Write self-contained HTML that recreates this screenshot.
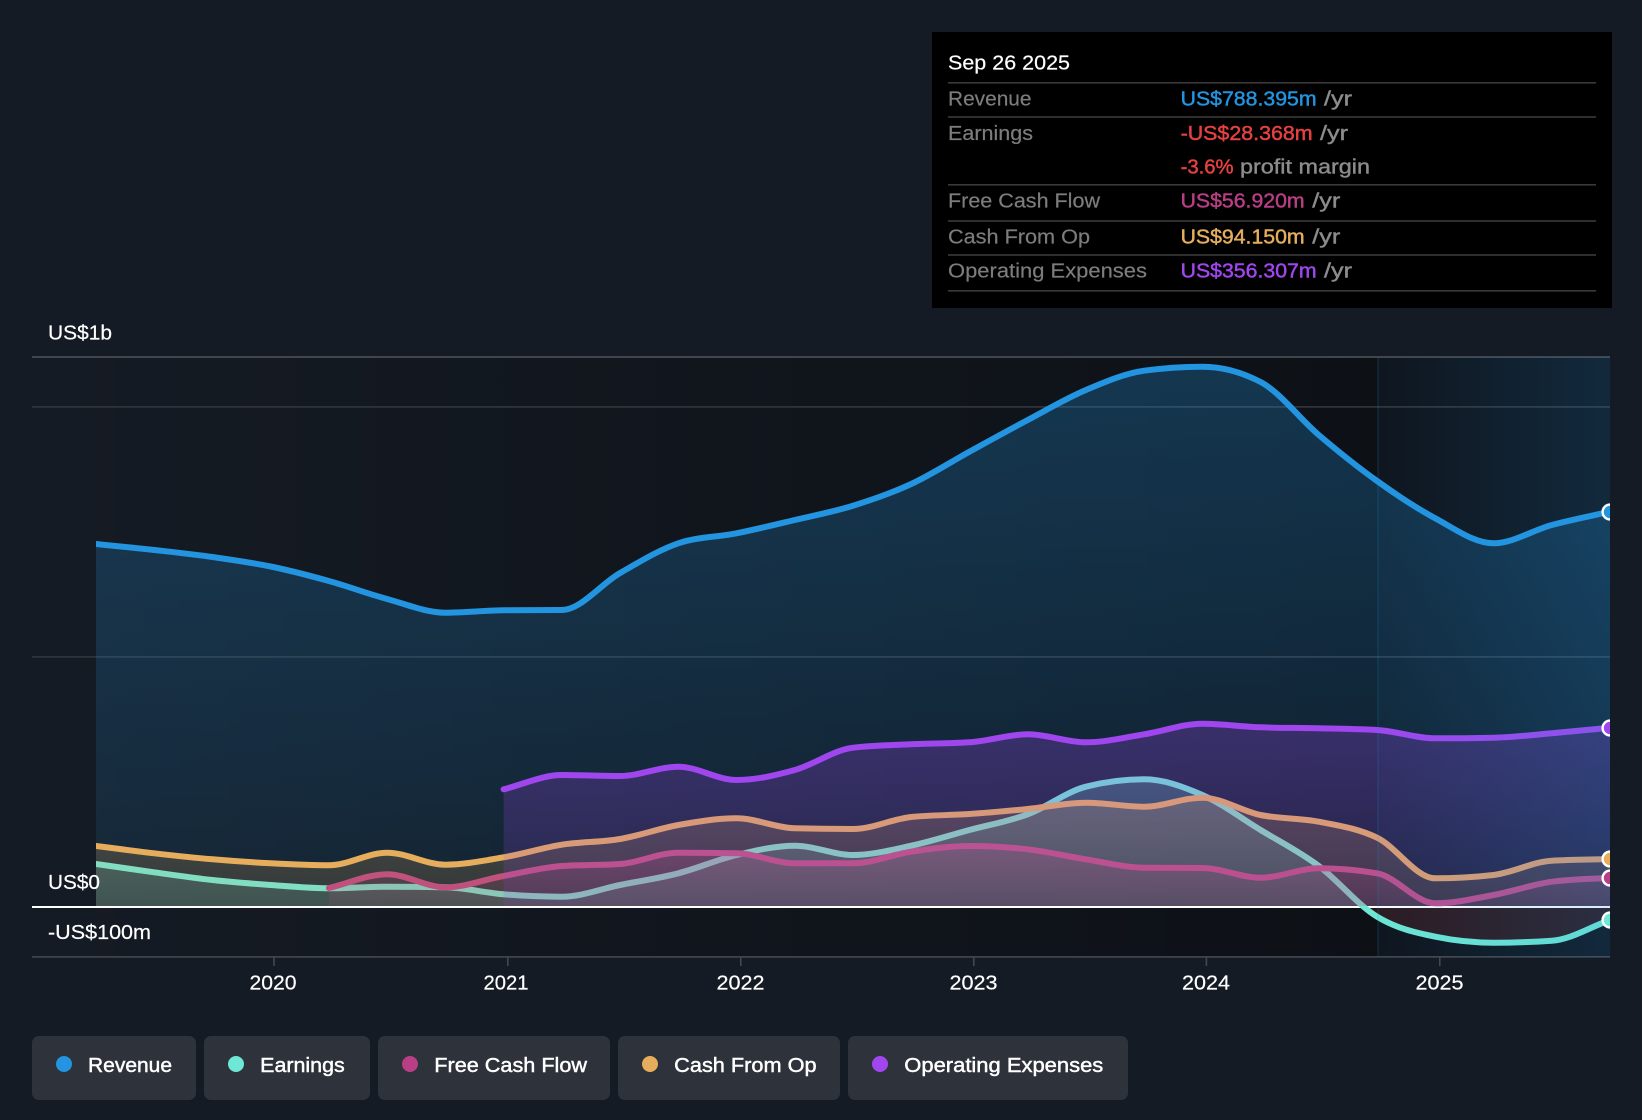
<!DOCTYPE html>
<html lang="en">
<head>
<meta charset="utf-8">
<title>Revenue and Earnings Chart</title>
<style>
html,body{margin:0;padding:0;background:#151b24;width:1642px;height:1120px;overflow:hidden}
svg{display:block;position:absolute;left:0;top:0}
text{font-family:"Liberation Sans",Arial,sans-serif;font-size:20px}
.m{stroke-width:.45px}
.w{fill:#fff;stroke:#fff;stroke-width:.2px}
.g{fill:#7c7c7c;stroke:#7c7c7c;stroke-width:.2px}
.y{fill:#8c8c8c;stroke:#8c8c8c;stroke-width:.4px}
.line{fill:none;stroke-width:6;stroke-linecap:round;stroke-linejoin:round}
</style>
</head>
<body>
<svg width="1642" height="1120" viewBox="0 0 1642 1120" xmlns="http://www.w3.org/2000/svg">
<defs>
<clipPath id="cp"><rect x="96" y="340" width="1514" height="640"/></clipPath>
<clipPath id="cdot"><rect x="1590" y="340" width="20" height="640"/></clipPath>
<clipPath id="cpos"><rect x="96" y="340" width="1514" height="566"/></clipPath>
<clipPath id="cneg"><rect x="96" y="908" width="1514" height="60"/></clipPath>
<linearGradient id="dark" gradientUnits="userSpaceOnUse" x1="32" y1="0" x2="1378" y2="0">
<stop offset="0" stop-color="#000" stop-opacity="0"/><stop offset="1" stop-color="#000" stop-opacity=".38"/>
</linearGradient>
<linearGradient id="fut" gradientUnits="userSpaceOnUse" x1="1378" y1="0" x2="1610" y2="0">
<stop offset="0" stop-color="#2394df" stop-opacity=".03"/><stop offset="1" stop-color="#2394df" stop-opacity=".18"/>
</linearGradient>
<linearGradient id="gR" gradientUnits="userSpaceOnUse" x1="0" y1="367" x2="0" y2="907">
<stop offset="0" stop-color="#2394df" stop-opacity=".28"/><stop offset="1" stop-color="#2394df" stop-opacity=".1"/>
</linearGradient>
<linearGradient id="gE" gradientUnits="userSpaceOnUse" x1="0" y1="779" x2="0" y2="907">
<stop offset="0" stop-color="#6ee7d4" stop-opacity=".27"/><stop offset="1" stop-color="#6ee7d4" stop-opacity=".16"/>
</linearGradient>
<linearGradient id="gF" gradientUnits="userSpaceOnUse" x1="0" y1="846" x2="0" y2="907">
<stop offset="0" stop-color="#b83f85" stop-opacity=".3"/><stop offset="1" stop-color="#b83f85" stop-opacity=".12"/>
</linearGradient>
<linearGradient id="gC" gradientUnits="userSpaceOnUse" x1="0" y1="797" x2="0" y2="907">
<stop offset="0" stop-color="#e6ae5c" stop-opacity=".24"/><stop offset="1" stop-color="#e6ae5c" stop-opacity=".14"/>
</linearGradient>
<linearGradient id="gO" gradientUnits="userSpaceOnUse" x1="0" y1="723" x2="0" y2="907">
<stop offset="0" stop-color="#a046ee" stop-opacity=".28"/><stop offset="1" stop-color="#a046ee" stop-opacity=".13"/>
</linearGradient>
</defs>

<rect width="1642" height="1120" fill="#151b24"/>
<rect x="32" y="357" width="1346" height="600" fill="url(#dark)"/>
<rect x="1378" y="357" width="232" height="600" fill="#000" fill-opacity=".3"/>

<rect x="32" y="356" width="1578" height="2" fill="#41454c"/>
<rect x="32" y="406" width="1578" height="1.8" fill="#2f3339"/>
<rect x="32" y="656" width="1578" height="1.8" fill="#2f3339"/>
<rect x="32" y="956" width="1578" height="1.8" fill="#3f434a"/>
<g fill="#43474e">
<rect x="273.2" y="957" width="1.6" height="9"/>
<rect x="507" y="957" width="1.6" height="9"/>
<rect x="740" y="957" width="1.6" height="9"/>
<rect x="973" y="957" width="1.6" height="9"/>
<rect x="1205.6" y="957" width="1.6" height="9"/>
<rect x="1439" y="957" width="1.6" height="9"/>
</g>
<rect x="32" y="906" width="1578" height="2" fill="#fff"/>

<g clip-path="url(#cp)">
<path id="aR" fill="url(#gR)" clip-path="url(#cpos)"/>
<path id="lR" class="line" stroke="#2394df"/>
<path id="aE" fill="url(#gE)" clip-path="url(#cpos)"/>
<path id="aE2" fill="#e64141" fill-opacity=".14" clip-path="url(#cneg)"/>
<path id="lE" class="line" stroke="#6ee7d4"/>
<path id="aF" fill="url(#gF)"/>
<path id="lF" class="line" stroke="#b83f85"/>
<path id="aC" fill="url(#gC)"/>
<path id="lC" class="line" stroke="#e6ae5c"/>
<path id="aO" fill="url(#gO)"/>
<path id="lO" class="line" stroke="#a046ee"/>
</g>

<rect x="1378" y="357" width="232" height="600" fill="url(#fut)"/>
<rect x="1377" y="358" width="2" height="598" fill="#2394df" fill-opacity=".12"/>

<g clip-path="url(#cdot)" stroke="#fff" stroke-width="2.4">
<circle cx="1610" cy="512" r="7.4" fill="#2394df"/>
<circle cx="1610" cy="920" r="7.4" fill="#6ee7d4"/>
<circle cx="1610" cy="878" r="7.4" fill="#b83f85"/>
<circle cx="1610" cy="859" r="7.4" fill="#e6ae5c"/>
<circle cx="1610" cy="728" r="7.4" fill="#a046ee"/>
</g>

<text class="w" x="48" y="339.3" textLength="64" lengthAdjust="spacingAndGlyphs">US$1b</text>
<text class="w" x="48" y="889" textLength="52" lengthAdjust="spacingAndGlyphs">US$0</text>
<text class="w" x="48" y="939" textLength="103" lengthAdjust="spacingAndGlyphs">-US$100m</text>

<text class="w" x="249.5" y="989.3" textLength="47" lengthAdjust="spacingAndGlyphs">2020</text>
<text class="w" x="483.5" y="989.3" textLength="45" lengthAdjust="spacingAndGlyphs">2021</text>
<text class="w" x="716.5" y="989.3" textLength="48" lengthAdjust="spacingAndGlyphs">2022</text>
<text class="w" x="949.5" y="989.3" textLength="48" lengthAdjust="spacingAndGlyphs">2023</text>
<text class="w" x="1182" y="989.3" textLength="48" lengthAdjust="spacingAndGlyphs">2024</text>
<text class="w" x="1415.5" y="989.3" textLength="48" lengthAdjust="spacingAndGlyphs">2025</text>

<!-- tooltip -->
<rect x="932" y="32" width="680" height="276" fill="#000"/>
<g fill="#3a3a3a">
<rect x="948" y="82" width="648" height="1.6"/>
<rect x="948" y="116.2" width="648" height="1.6"/>
<rect x="948" y="184" width="648" height="1.6"/>
<rect x="948" y="220.2" width="648" height="1.6"/>
<rect x="948" y="254.2" width="648" height="1.6"/>
<rect x="948" y="290" width="648" height="1.6"/>
</g>
<text class="w m" x="948" y="69.3" textLength="122" lengthAdjust="spacingAndGlyphs">Sep 26 2025</text>

<text class="g" x="948" y="105.3" textLength="83.5" lengthAdjust="spacingAndGlyphs">Revenue</text>
<text class="m" fill="#2394df" stroke="#2394df" x="1180.6" y="105.3" textLength="136" lengthAdjust="spacingAndGlyphs">US$788.395m</text>
<text class="y" x="1324" y="105.3" textLength="28" lengthAdjust="spacingAndGlyphs">/yr</text>

<text class="g" x="948" y="140" textLength="85" lengthAdjust="spacingAndGlyphs">Earnings</text>
<text class="m" fill="#e64141" stroke="#e64141" x="1180.6" y="140" textLength="132" lengthAdjust="spacingAndGlyphs">-US$28.368m</text>
<text class="y" x="1320" y="140" textLength="28" lengthAdjust="spacingAndGlyphs">/yr</text>

<text class="m" fill="#e64141" stroke="#e64141" x="1180.6" y="173.7" textLength="53" lengthAdjust="spacingAndGlyphs">-3.6%</text>
<text class="y" x="1240" y="173.7" textLength="130" lengthAdjust="spacingAndGlyphs">profit margin</text>

<text class="g" x="948" y="207.5" textLength="152" lengthAdjust="spacingAndGlyphs">Free Cash Flow</text>
<text class="m" fill="#b83f85" stroke="#b83f85" x="1180.6" y="207.5" textLength="124" lengthAdjust="spacingAndGlyphs">US$56.920m</text>
<text class="y" x="1312.3" y="207.5" textLength="28" lengthAdjust="spacingAndGlyphs">/yr</text>

<text class="g" x="948" y="243.3" textLength="142" lengthAdjust="spacingAndGlyphs">Cash From Op</text>
<text class="m" fill="#e6ae5c" stroke="#e6ae5c" x="1180.6" y="243.3" textLength="124" lengthAdjust="spacingAndGlyphs">US$94.150m</text>
<text class="y" x="1312.3" y="243.3" textLength="28" lengthAdjust="spacingAndGlyphs">/yr</text>

<text class="g" x="948" y="277.4" textLength="199" lengthAdjust="spacingAndGlyphs">Operating Expenses</text>
<text class="m" fill="#a046ee" stroke="#a046ee" x="1180.6" y="277.4" textLength="136" lengthAdjust="spacingAndGlyphs">US$356.307m</text>
<text class="y" x="1324" y="277.4" textLength="28" lengthAdjust="spacingAndGlyphs">/yr</text>

<!-- legend -->
<g fill="#2e323b">
<rect x="32" y="1036" width="164" height="64" rx="7"/>
<rect x="204" y="1036" width="166" height="64" rx="7"/>
<rect x="378" y="1036" width="232" height="64" rx="7"/>
<rect x="618" y="1036" width="222" height="64" rx="7"/>
<rect x="848" y="1036" width="280" height="64" rx="7"/>
</g>
<circle cx="64" cy="1064" r="8" fill="#2394df"/>
<circle cx="236" cy="1064" r="8" fill="#6ee7d4"/>
<circle cx="410" cy="1064" r="8" fill="#b83f85"/>
<circle cx="650" cy="1064" r="8" fill="#e6ae5c"/>
<circle cx="880" cy="1064" r="8" fill="#a046ee"/>
<g fill="#fff" stroke="#fff">
<text class="m" x="88" y="1072" textLength="84" lengthAdjust="spacingAndGlyphs">Revenue</text>
<text class="m" x="260.2" y="1072" textLength="84.5" lengthAdjust="spacingAndGlyphs">Earnings</text>
<text class="m" x="434.3" y="1072" textLength="152.7" lengthAdjust="spacingAndGlyphs">Free Cash Flow</text>
<text class="m" x="674.2" y="1072" textLength="142.4" lengthAdjust="spacingAndGlyphs">Cash From Op</text>
<text class="m" x="904.3" y="1072" textLength="199" lengthAdjust="spacingAndGlyphs">Operating Expenses</text>
</g>
</svg>
<script>
(function(){
var X=function(k){return 96+58.23*k};
var S={
R:[0,[544,550,557,566.5,581,599,612.7,610.3,610,573,543.3,533.3,520,505.7,484,451.7,420,390,370.7,366.7,382,435,481,518.3,543.3,525,511.7]],
E:[0,[864,872.3,880,885,888.3,886.7,887.3,894.3,896.7,885,873.3,855,845.7,855,845.7,830,814.3,786.7,779.3,795,830,866,916.7,936.7,942.7,940.7,920]],
F:[4,[888,874.3,887.3,876,866,864,852.7,853.3,863.3,863.3,851.7,846,849.3,859.3,867.7,868,877.7,868.3,873.3,903.3,895,881.7,877.7]],
C:[0,[846,853.3,859.3,863.3,865.3,852.7,864.7,857.3,844.7,839,825,818.3,828.3,829,817,814,809,802.7,806.7,797.7,815,821.7,837.7,878.3,875,860.7,859]],
O:[7,[789.3,775,776,766.7,780,770,747.7,744.3,742.3,734.3,742.3,734.3,723.7,727.3,728.3,730,738.3,737.7,733.3,727.7]]
};
function sign(v){return v<0?-1:1}
function mono(px,py){
 var n=px.length,m=[],d=[],i;
 for(i=0;i<n-1;i++)d[i]=(py[i+1]-py[i])/(px[i+1]-px[i]);
 for(i=1;i<n-1;i++){
  var h0=px[i]-px[i-1],h1=px[i+1]-px[i],p=(d[i-1]*h1+d[i]*h0)/(h0+h1);
  m[i]=(sign(d[i-1])+sign(d[i]))*Math.min(Math.abs(d[i-1]),Math.abs(d[i]),.5*Math.abs(p))||0;
 }
 m[0]=d[0];m[n-1]=d[n-2];
 var s="M"+px[0].toFixed(1)+","+py[0].toFixed(1);
 for(i=0;i<n-1;i++){
  var h=(px[i+1]-px[i])/3;
  s+="C"+(px[i]+h).toFixed(1)+","+(py[i]+m[i]*h).toFixed(1)+" "+(px[i+1]-h).toFixed(1)+","+(py[i+1]-m[i+1]*h).toFixed(1)+" "+px[i+1].toFixed(1)+","+py[i+1].toFixed(1);
 }
 return s;
}
Object.keys(S).forEach(function(key){
 var st=S[key][0],ys=S[key][1],xs=ys.map(function(_,i){return X(st+i)});
 var d=mono(xs,ys);
 document.getElementById("l"+key).setAttribute("d",d);
 var base=key==="E"?907:906;
 var a=d+"L"+xs[xs.length-1].toFixed(1)+","+base+"L"+xs[0].toFixed(1)+","+base+"Z";
 document.getElementById("a"+key).setAttribute("d",a);
 if(key==="E")document.getElementById("aE2").setAttribute("d",a);
});
})();
</script>
</body>
</html>
